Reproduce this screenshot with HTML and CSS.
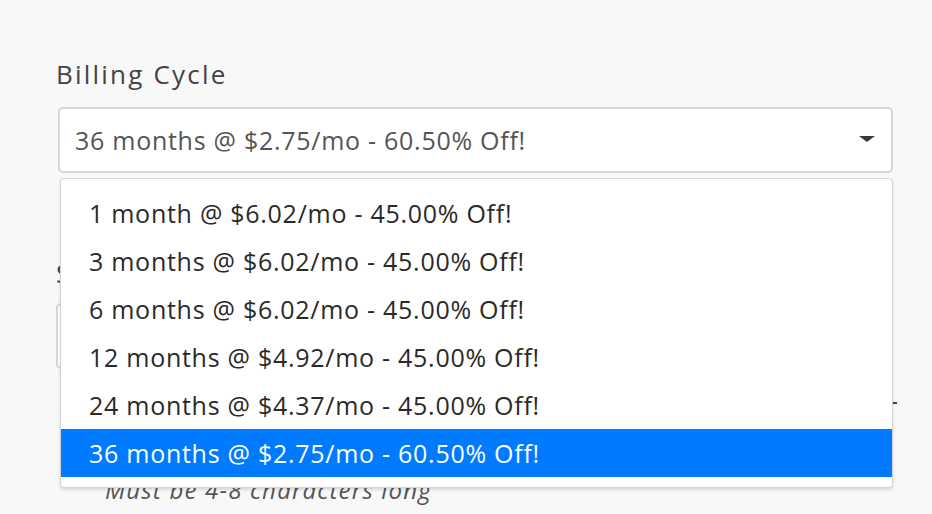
FILE: index.html
```html
<!DOCTYPE html>
<html>
<head>
<meta charset="utf-8">
<link rel="stylesheet" href="styles.css">
</head>
<body>
<div class="form">
  <div class="group">
    <div class="label">Billing Cycle</div>
    <div class="select-wrap">
      <div class="select">
        <span class="value">36 months @ $2.75/mo - 60.50% Off!</span>
        <svg class="caret" width="16" height="8" viewBox="0 0 16 8"><path d="M0 1 H16 L8 7 Z" fill="#3a3a3a"/></svg>
      </div>
      <ul class="dropdown">
        <li>1 month @ $6.02/mo - 45.00% Off!</li>
        <li>3 months @ $6.02/mo - 45.00% Off!</li>
        <li>6 months @ $6.02/mo - 45.00% Off!</li>
        <li>12 months @ $4.92/mo - 45.00% Off!</li>
        <li>24 months @ $4.37/mo - 45.00% Off!</li>
        <li class="active">36 months @ $2.75/mo - 60.50% Off!</li>
      </ul>
    </div>
  </div>
  <div class="group second">
    <div class="label">Security PIN</div>
    <div class="input"></div>
    <div class="mark-row"><span class="mark"></span></div>
    <div class="hint">Must be 4-8 characters long</div>
  </div>
</div>
</body>
</html>
```
FILE: styles.css
```css
* { box-sizing: border-box; }
html, body { margin: 0; padding: 0; }
body {
  background: #f8f8f8;
  width: 932px;
  height: 514px;
  overflow: hidden;
  font-family: "Open Sans", "Liberation Sans", sans-serif;
}
.form {
  padding: 56px 39px 0 56px;
}
.label {
  font-size: 26px;
  color: #444;
  line-height: 36px;
  letter-spacing: 2.2px;
}
.select-wrap {
  position: relative;
  margin-top: 15px;
  margin-left: 2px;
}
.select {
  height: 66px;
  background: #fff;
  border: 2px solid #d2d6e0;
  border-radius: 5px;
  display: flex;
  align-items: center;
  justify-content: space-between;
  padding: 0 16px 0 15px;
  font-size: 25px;
  letter-spacing: 0.73px;
  color: #555;
}
.caret { display: block; margin-top: -3px; }
.dropdown {
  position: absolute;
  top: 71px;
  left: 2px;
  right: 0;
  margin: 0;
  padding: 10px 0;
  list-style: none;
  background: #fff;
  border: 1px solid #d4d4d4;
  border-radius: 4px;
  box-shadow: 0 2px 3px rgba(0,0,0,0.12);
  z-index: 2;
}
.dropdown li {
  height: 48px;
  line-height: 48px;
  padding-left: 28px;
  font-size: 25px;
  letter-spacing: 0.73px;
  color: #2a2a2a;
}
.dropdown li.active {
  background: #007aff;
  color: #fff;
}
.second { margin-top: 80px; }
.second .label { line-height: 40px; margin-bottom: 10px; }
.input {
  height: 66px;
  background: #fff;
  border: 2px solid #d2d6e0;
  border-radius: 5px;
}
.mark-row {
  height: 68px;
  display: flex;
  justify-content: flex-end;
  align-items: center;
}
.mark {
  width: 4px;
  height: 2px;
  background: #444;
  margin-right: -4px;
}
.hint {
  font-style: italic;
  font-size: 24px;
  line-height: 30px;
  letter-spacing: 1.2px;
  color: #555;
  padding-left: 49px;
  margin-top: 38px;
}
```
